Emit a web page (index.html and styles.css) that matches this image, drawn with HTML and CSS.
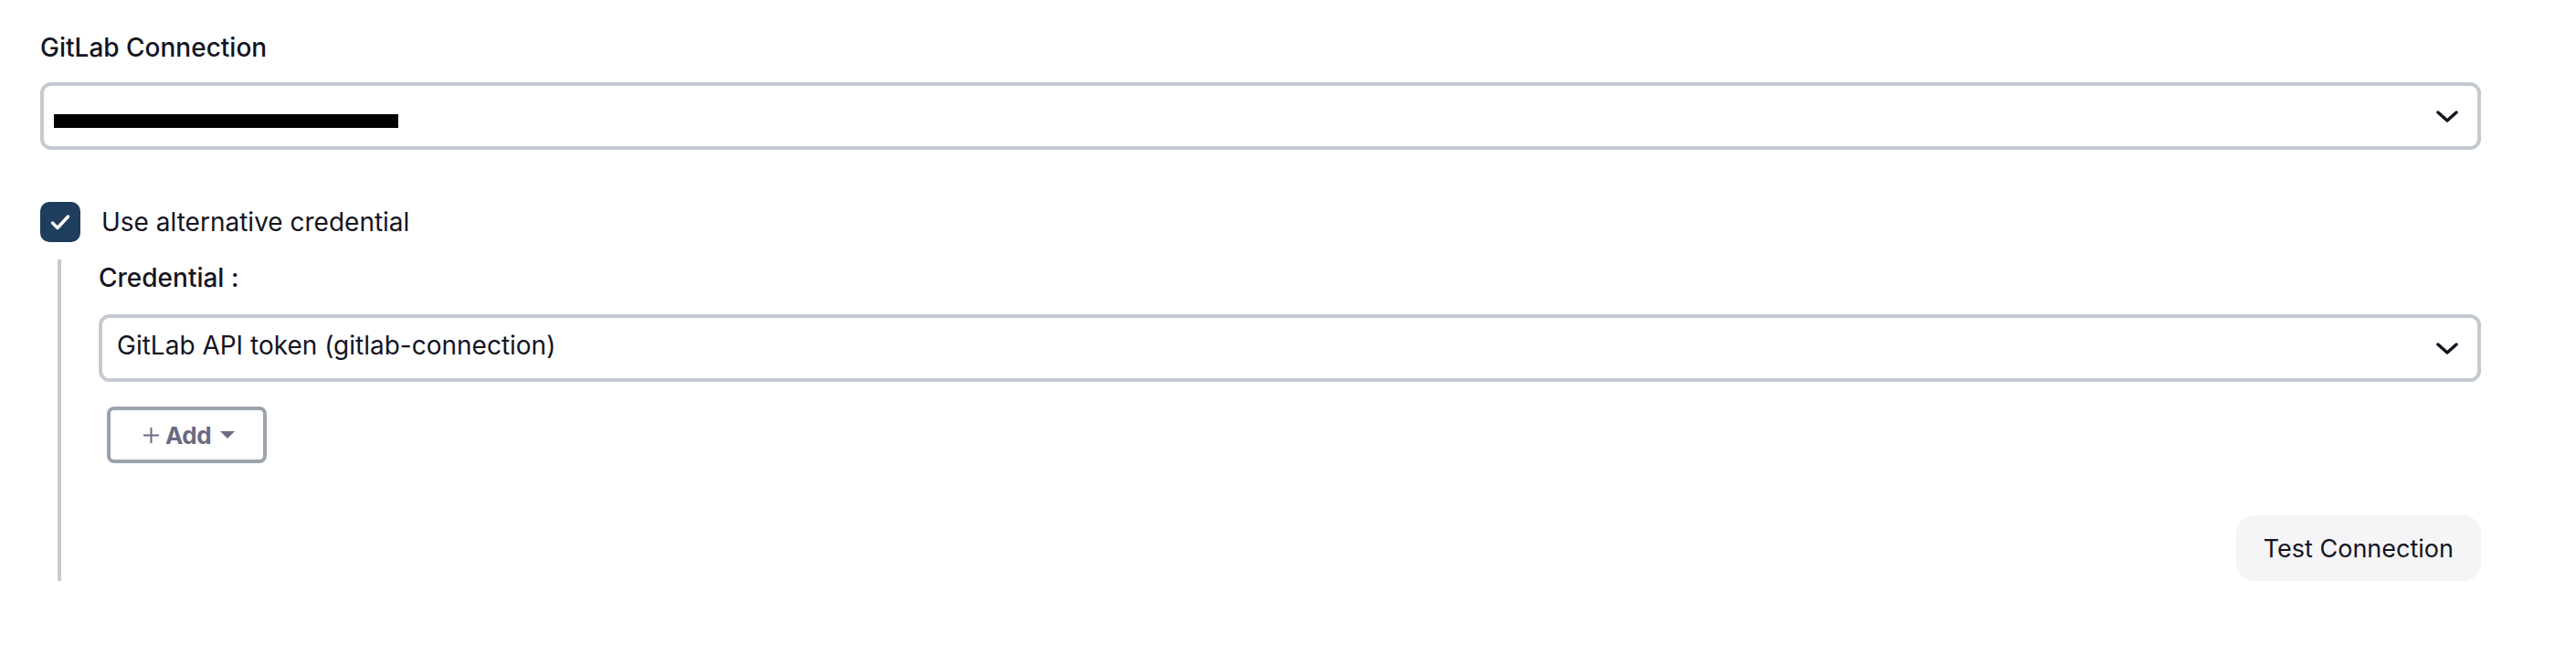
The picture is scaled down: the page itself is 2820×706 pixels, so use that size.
FILE: index.html
```html
<!DOCTYPE html>
<html lang="en">
<head>
  <meta charset="UTF-8">
  <meta name="viewport" content="width=device-width, initial-scale=1.0">
  <title>GitLab Connection</title>
  <link rel="stylesheet" href="styles.css">
</head>
<body>

  <div class="form">
    <!-- Connection picker -->
    <div class="field">
      <div class="form-label">GitLab Connection</div>
      <div class="select">
        <span class="select-value"><span class="redacted"></span></span>
        <svg class="chevron" width="24" height="13" viewBox="0 0 24 13"><path d="M2 2 L12 11 L22 2" /></svg>
      </div>
    </div>

    <!-- Alternative credential toggle -->
    <label class="checkbox-row">
      <span class="checkbox">
        <svg width="44" height="44" viewBox="0 0 44 44"><path d="M13.5 23 L19 28.5 L30.5 16" /></svg>
      </span>
      <span class="checkbox-label">Use alternative credential</span>
    </label>

    <div class="nested">
      <div class="form-label">Credential :</div>
      <div class="select">
        <span class="select-value">GitLab API token (gitlab-connection)</span>
        <svg class="chevron" width="24" height="13" viewBox="0 0 24 13"><path d="M2 2 L12 11 L22 2" /></svg>
      </div>

      <button class="add-btn">
        <svg class="plus" width="17" height="17" viewBox="0 0 17 17"><path d="M8.5 0 V17 M0 8.5 H17" /></svg>
        <span>Add</span>
        <svg class="caret" width="16" height="8" viewBox="0 0 16 8"><polygon points="0,0 16,0 8,8" /></svg>
      </button>

      <div class="actions">
        <button class="test-btn">Test Connection</button>
      </div>
    </div>
  </div>

</body>
</html>
```

FILE: styles.css
```css
/* Basic Styling */
body {
  margin: 0;
  background-color: #fff;
  color: #14141f;
  font-family: Inter, "Noto Sans", sans-serif;
}

.form {
  padding: 32px 104px 0 44px;
}

.form-label {
  font-size: 28px;
  line-height: 40px;
  font-weight: 500;
  margin-bottom: 18px;
}

.select {
  box-sizing: border-box;
  height: 74px;
  display: flex;
  align-items: center;
  justify-content: space-between;
  border: 4px solid #c4cad0;
  border-radius: 12px;
  padding: 0 21px 0 16px;
  background-color: #fff;
}

.select-value {
  font-size: 28px;
  line-height: 40px;
  padding-bottom: 7px;
}

.redacted {
  display: inline-block;
  width: 377px;
  height: 15px;
  margin-left: -5px;
  background-color: #000;
  vertical-align: middle;
  position: relative;
  top: 7px;
}

.chevron path {
  fill: none;
  stroke: #14141f;
  stroke-width: 3.5;
  stroke-linecap: round;
  stroke-linejoin: round;
}

.checkbox-row {
  display: flex;
  align-items: center;
  gap: 23px;
  margin-top: 57px;
}

.checkbox {
  width: 44px;
  height: 44px;
  border-radius: 10px;
  background-color: #1f3e5d;
  display: flex;
}

.checkbox path {
  fill: none;
  stroke: #fff;
  stroke-width: 3.5;
  stroke-linecap: round;
  stroke-linejoin: round;
}

.checkbox-label {
  font-size: 28px;
  line-height: 40px;
  font-weight: 400;
}

.nested {
  margin: 19px 0 0 19px;
  border-left: 4px solid #c4cad0;
  padding-left: 41px;
}

.nested .form-label {
  margin-bottom: 20px;
}

.add-btn {
  box-sizing: border-box;
  height: 62px;
  margin: 27px 0 0 9px;
  display: inline-flex;
  align-items: center;
  padding: 0 31px 0 36px;
  border: 4px solid #9ba3ad;
  border-radius: 8px;
  background-color: #fff;
  color: #6c6a82;
  font-family: Inter, "Noto Sans", sans-serif;
  font-size: 26px;
  font-weight: 700;
  cursor: pointer;
}

.add-btn span {
  margin: 0 10px 0 7px;
  letter-spacing: -0.5px;
}

.plus path {
  stroke: #6c6a82;
  stroke-width: 2;
}

.caret polygon {
  fill: #6c6a82;
}

.actions {
  display: flex;
  justify-content: flex-end;
  margin-top: 57px;
}

.test-btn {
  height: 72px;
  padding: 0 30px;
  border: none;
  border-radius: 20px;
  background-color: #f5f5f7;
  color: #14141f;
  font-family: Inter, "Noto Sans", sans-serif;
  font-size: 27px;
  font-weight: 400;
  cursor: pointer;
}
```
